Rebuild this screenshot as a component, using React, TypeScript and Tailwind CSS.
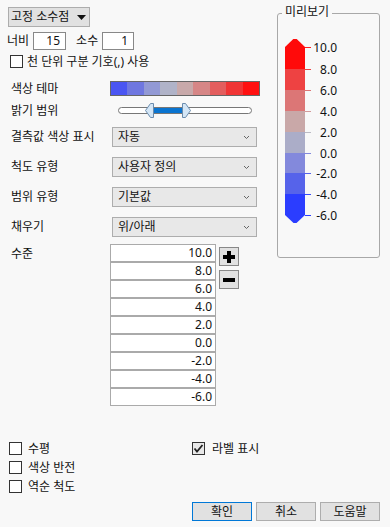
import React from "react";

const themeColors = ["#4a55f2", "#6f77e0", "#9299d5", "#b0b3c8", "#c8a9aa", "#d68686", "#e35e5e", "#f03535", "#ff1010"];
const levels = ["10.0", "8.0", "6.0", "4.0", "2.0", "0.0", "-2.0", "-4.0", "-6.0"];

const segments = [
  { y1: 55, y2: 76, c: "#ee4242" },
  { y1: 76, y2: 97, c: "#dc7676" },
  { y1: 97, y2: 118, c: "#c9a8a8" },
  { y1: 118, y2: 139, c: "#abadc8" },
  { y1: 139, y2: 159, c: "#8389dc" },
  { y1: 159, y2: 180, c: "#5663ea" },
];
const ticks = [
  { y: 33, c: "#ff2020" },
  { y: 55, c: "#ee4242" },
  { y: 76, c: "#dc7676" },
  { y: 97, c: "#d29a9a" },
  { y: 118, c: "#bbbbc4" },
  { y: 139, c: "#8389dc" },
  { y: 159, c: "#5663ea" },
  { y: 180, c: "#3a4cf8" },
  { y: 201, c: "#2b3dff" },
];

function Check({ checked }: { checked?: boolean }) {
  return (
    <span className={`w-[13px] h-[13px] shrink-0 border border-[#333] flex items-center justify-center ${checked ? "bg-[#e8e8e8]" : "bg-white"}`}>
      {checked && (
        <svg width="11" height="11" viewBox="0 0 11 11">
          <path d="M1.5 5.5 L4 8.5 L9.5 2" fill="none" stroke="#222" strokeWidth="1.8" />
        </svg>
      )}
    </span>
  );
}

function Select({ value }: { value: string }) {
  return (
    <div className="w-[145px] h-[20px] border border-[#adadad] bg-[#e8e8e8] flex items-center justify-between pl-[5px] pr-[6px]">
      <span className="leading-none">{value}</span>
      <svg width="7" height="5" viewBox="0 0 7 5">
        <path d="M1 1 L3.5 3.5 L6 1" fill="none" stroke="#666" strokeWidth="1" />
      </svg>
    </div>
  );
}

function LabeledRow({ label, children, className = "" }: { label: string; children: React.ReactNode; className?: string }) {
  return (
    <div className={`flex items-center ${className}`}>
      <span className="w-[112px] pl-[11px] leading-none shrink-0">{label}</span>
      {children}
    </div>
  );
}

function Legend() {
  return (
    <svg width="100" height="230" viewBox="0 0 100 230" className="block">
      <polygon points="7,33 15.3,25 18.7,25 27,33 27,55 7,55" fill="#ff0a0a" />
      {segments.map((s) => (
        <rect key={s.y1} x="7" y={s.y1} width="20" height={s.y2 - s.y1} fill={s.c} />
      ))}
      <polygon points="7,180 27,180 27,201 18.5,209 15.5,209 7,201" fill="#2b3dff" />
      {ticks.map((t, i) => (
        <g key={t.y}>
          <line x1="27" y1={t.y + 0.5} x2="33" y2={t.y + 0.5} stroke={t.c} strokeWidth="1" />
          <text x="59" y={t.y + 5} textAnchor="end" fontSize="12" fill="#111" fontFamily="'Noto Sans', sans-serif">
            {levels[i]}
          </text>
        </g>
      ))}
    </svg>
  );
}

export default function App() {
  return (
    <div className="w-[390px] h-[527px] bg-[#f8f8f8] text-[12px] text-[#111] font-[family-name:'Noto_Sans','Noto_Sans_CJK_KR',sans-serif] overflow-hidden">
      <div className="flex">
        <div className="w-[277px] shrink-0 flex flex-col">
          <button className="mt-[7px] ml-[8px] w-[82px] h-[20px] border border-[#adadad] bg-[#e1e1e1] flex items-center justify-between pl-[2px] pr-[3px]">
            <span className="leading-none">고정 소수점</span>
            <svg width="9" height="5" viewBox="0 0 9 5">
              <path d="M0 0 H9 L4.5 5 Z" fill="#111" />
            </svg>
          </button>

          <div className="mt-[5px] h-[18px] flex items-center">
            <span className="ml-[7px] leading-none">너비</span>
            <div className="ml-[4px] w-[33px] h-[18px] border border-[#888] bg-white flex items-center justify-end pr-[5px] leading-none">15</div>
            <span className="ml-[10px] leading-none">소수</span>
            <div className="ml-[4px] w-[32px] h-[18px] border border-[#888] bg-white flex items-center justify-end pr-[5px] leading-none">1</div>
          </div>

          <div className="mt-[5px] ml-[10px] h-[13px] flex items-center gap-[4px]">
            <Check />
            <span className="leading-none">천 단위 구분 기호(,) 사용</span>
          </div>

          <div className="mt-[13px] flex items-center h-[15px]">
            <span className="w-[110px] pl-[11px] leading-none shrink-0">색상 테마</span>
            <div className="w-[150px] h-[15px] border border-[#666] flex">
              {themeColors.map((c) => (
                <div key={c} className="flex-1" style={{ backgroundColor: c }} />
              ))}
            </div>
          </div>

          <div className="mt-[7px] flex items-center h-[15px]">
            <span className="w-[110px] pl-[11px] leading-none shrink-0">밝기 범위</span>
            <svg width="150" height="16" viewBox="0 0 150 16">
              <rect x="8.5" y="4.5" width="133" height="6" rx="3" fill="#fff" stroke="#777" />
              <rect x="42" y="5" width="31" height="5" fill="#0a74d0" />
              <polygon points="35.5,7.5 40.5,0.5 43.5,0.5 43.5,14.5 40.5,14.5" fill="#d4e6f6" stroke="#6a8cae" />
              <polygon points="72.5,0.5 75.5,0.5 80.5,7.5 75.5,14.5 72.5,14.5" fill="#d4e6f6" stroke="#6a8cae" />
            </svg>
          </div>

          <LabeledRow label="결측값 색상 표시" className="mt-[9px]">
            <Select value="자동" />
          </LabeledRow>
          <LabeledRow label="척도 유형" className="mt-[10px]">
            <Select value="사용자 정의" />
          </LabeledRow>
          <LabeledRow label="범위 유형" className="mt-[10px]">
            <Select value="기본값" />
          </LabeledRow>
          <LabeledRow label="채우기" className="mt-[10px]">
            <Select value="위/아래" />
          </LabeledRow>

          <div className="mt-[7px] flex items-start">
            <span className="w-[110px] pl-[11px] shrink-0 leading-[18px] mt-[1px]">수준</span>
            <div className="w-[106px] flex flex-col">
              {levels.map((v) => (
                <div key={v} className="h-[18px] border border-[#aaa] bg-white flex items-center justify-end pr-[3px] leading-none">
                  {v}
                </div>
              ))}
            </div>
            <div className="ml-[3px] mt-[3px] flex flex-col gap-[4px]">
              <button className="w-[20px] h-[19px] border border-[#888] bg-[#e1e1e1] flex items-center justify-center">
                <svg width="12" height="12" viewBox="0 0 12 12">
                  <path d="M4 0 H8 V4 H12 V8 H8 V12 H4 V8 H0 V4 H4 Z" fill="#000" />
                </svg>
              </button>
              <button className="w-[20px] h-[19px] border border-[#888] bg-[#e1e1e1] flex items-center justify-center">
                <svg width="12" height="4" viewBox="0 0 12 4">
                  <rect width="12" height="4" fill="#000" />
                </svg>
              </button>
            </div>
          </div>
        </div>

        <div className="mt-[13px] w-[103px] h-[245px] shrink-0 border border-[#a8a8a8] rounded-[3px] relative">
          <span className="absolute -top-[9px] left-[4px] px-[3px] bg-[#f8f8f8] leading-[14px]">미리보기</span>
          <Legend />
        </div>
      </div>

      <div className="mt-[36px] flex">
        <div className="w-[192px] pl-[9px] flex flex-col gap-[6px]">
          <div className="h-[13px] flex items-center gap-[6px]">
            <Check />
            <span className="leading-none">수평</span>
          </div>
          <div className="h-[13px] flex items-center gap-[6px]">
            <Check />
            <span className="leading-none">색상 반전</span>
          </div>
          <div className="h-[13px] flex items-center gap-[6px]">
            <Check />
            <span className="leading-none">역순 척도</span>
          </div>
        </div>
        <div className="h-[13px] flex items-center gap-[7px]">
          <Check checked />
          <span className="leading-none">라벨 표시</span>
        </div>
      </div>

      <div className="mt-[9px] pl-[192px] flex gap-[4px]">
        <button className="w-[60px] h-[19px] border border-[#0078d7] bg-[#e1e1e1] flex items-center justify-center leading-none">확인</button>
        <button className="w-[60px] h-[19px] border border-[#adadad] bg-[#e1e1e1] flex items-center justify-center leading-none">취소</button>
        <button className="w-[60px] h-[19px] border border-[#adadad] bg-[#e1e1e1] flex items-center justify-center leading-none">도움말</button>
      </div>
    </div>
  );
}
